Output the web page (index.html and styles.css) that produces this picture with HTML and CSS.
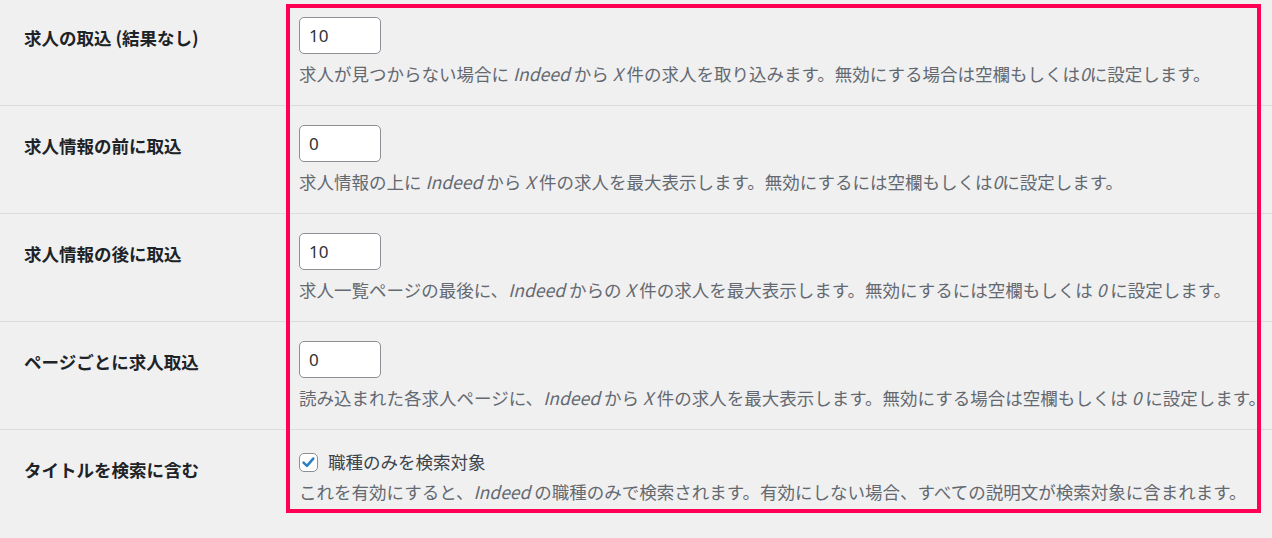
FILE: index.html
```html
<!DOCTYPE html>
<html lang="ja">
<head>
    <meta charset="UTF-8">
    <meta name="viewport" content="width=device-width, initial-scale=1.0">
    <title>Indeed 取込設定</title>
    <link rel="stylesheet" href="styles.css">
</head>
<body>
    <div class="form-table">
        <div class="row">
            <div class="row-label">求人の取込 (結果なし)</div>
            <div class="row-field">
                <input class="small-text" type="number" value="10">
                <p class="description">求人が見つからない場合に <em>Indeed</em> から <em>X</em> 件の求人を取り込みます。無効にする場合は空欄もしくは<em>0</em>に設定します。</p>
            </div>
        </div>
        <div class="row">
            <div class="row-label">求人情報の前に取込</div>
            <div class="row-field">
                <input class="small-text" type="number" value="0">
                <p class="description">求人情報の上に <em>Indeed</em> から <em>X</em> 件の求人を最大表示します。無効にするには空欄もしくは<em>0</em>に設定します。</p>
            </div>
        </div>
        <div class="row">
            <div class="row-label">求人情報の後に取込</div>
            <div class="row-field">
                <input class="small-text" type="number" value="10">
                <p class="description">求人一覧ページの最後に、<em>Indeed</em> からの <em>X</em> 件の求人を最大表示します。無効にするには空欄もしくは <em>0</em> に設定します。</p>
            </div>
        </div>
        <div class="row">
            <div class="row-label">ページごとに求人取込</div>
            <div class="row-field">
                <input class="small-text" type="number" value="0">
                <p class="description">読み込まれた各求人ページに、<em>Indeed</em> から <em>X</em> 件の求人を最大表示します。無効にする場合は空欄もしくは <em>0</em> に設定します。</p>
            </div>
        </div>
        <div class="row">
            <div class="row-label">タイトルを検索に含む</div>
            <div class="row-field check-field">
                <label class="check-line">
                    <span class="checkbox">
                        <svg viewBox="0 0 20 20" width="17" height="17"><path d="M4.2 10.2 L8.2 14 L15.6 5.4" fill="none" stroke="#2d7fc0" stroke-width="3" stroke-linecap="round" stroke-linejoin="round"/></svg>
                    </span>
                    職種のみを検索対象
                </label>
                <p class="description">これを有効にすると、<em>Indeed</em> の職種のみで検索されます。有効にしない場合、すべての説明文が検索対象に含まれます。</p>
            </div>
        </div>
    </div>

    <div class="highlight"></div>
</body>
</html>
```

FILE: styles.css
```css
body {
    margin: 0;
    padding: 0;
    position: relative;
    background-color: #f0f0f1;
    font-family: "Noto Sans CJK JP", "Noto Sans", sans-serif;
    font-size: 17.5px;
    color: #3c434a;
    overflow: hidden;
}

.form-table {
    margin-top: -2px;
}

.row {
    display: grid;
    grid-template-columns: 299px 1fr;
    border-bottom: 1px solid #dcdcde;
}

.row:last-child {
    border-bottom: none;
}

.row-label {
    padding: 28px 0 0 24px;
    line-height: 24px;
    font-weight: 700;
    color: #1d2327;
    white-space: nowrap;
}

.row-field {
    padding: 19px 0 18px 0;
    white-space: nowrap;
}

.small-text {
    display: block;
    box-sizing: border-box;
    width: 82px;
    height: 37px;
    margin: 0;
    padding: 0 9px;
    border: 1px solid #8c8f94;
    border-radius: 5px;
    background-color: #fff;
    font-family: "Noto Sans", sans-serif;
    font-size: 17px;
    color: #2c3338;
    outline: none;
    -moz-appearance: textfield;
}

.small-text::-webkit-inner-spin-button,
.small-text::-webkit-outer-spin-button {
    -webkit-appearance: none;
    margin: 0;
}

.description {
    margin: 7px 0 0 0;
    line-height: 26px;
    color: #646970;
}

.description em {
    font-style: italic;
}

.check-line {
    display: flex;
    align-items: center;
    gap: 10px;
    height: 26px;
    line-height: 26px;
    color: #3c434a;
}

.checkbox {
    display: flex;
    align-items: center;
    justify-content: center;
    box-sizing: border-box;
    width: 19px;
    height: 19px;
    border: 1px solid #8c8f94;
    border-radius: 5px;
    background-color: #fff;
}

.check-field .description {
    margin-top: 4px;
}

.highlight {
    position: absolute;
    left: 286px;
    top: 4px;
    width: 975px;
    height: 509px;
    box-sizing: border-box;
    border: 4px solid #ff0055;
    pointer-events: none;
}
```
